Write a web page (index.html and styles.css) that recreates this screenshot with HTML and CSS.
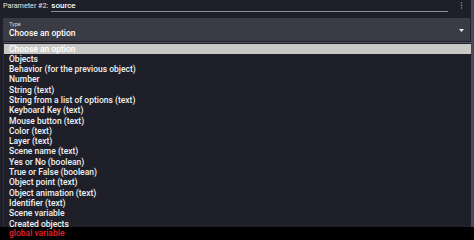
FILE: index.html
```html
<!DOCTYPE html>
<html>
<head>
<meta charset="utf-8">
<link rel="stylesheet" href="styles.css">
</head>
<body>
<div class="page">
  <div class="main">
    <div class="content">
      <div class="param-row">
        <span class="param-label">Parameter #2:</span>
        <span class="param-input">source</span>
        <span class="kebab">
          <svg width="3" height="7" viewBox="0 0 3 7"><circle cx="1.5" cy="1" r="0.7" fill="#9a9aa2"/><circle cx="1.5" cy="3.5" r="0.7" fill="#9a9aa2"/><circle cx="1.5" cy="6" r="0.7" fill="#9a9aa2"/></svg>
        </span>
      </div>
      <div class="select">
        <div class="select-text">
          <div class="select-label">Type</div>
          <div class="select-value">Choose an option</div>
        </div>
        <svg class="arrow" width="5" height="3" viewBox="0 0 5 3"><path d="M0 0h5L2.5 3z" fill="#f0f0f0"/></svg>
      </div>
      <div class="list">
        <div class="item selected">Choose an option</div>
        <div class="item">Objects</div>
        <div class="item">Behavior (for the previous object)</div>
        <div class="item">Number</div>
        <div class="item">String (text)</div>
        <div class="item">String from a list of options (text)</div>
        <div class="item">Keyboard Key (text)</div>
        <div class="item">Mouse button (text)</div>
        <div class="item">Color (text)</div>
        <div class="item">Layer (text)</div>
        <div class="item">Scene name (text)</div>
        <div class="item">Yes or No (boolean)</div>
        <div class="item">True or False (boolean)</div>
        <div class="item">Object point (text)</div>
        <div class="item">Object animation (text)</div>
        <div class="item">Identifier (text)</div>
        <div class="item">Scene variable</div>
        <div class="item">Created objects</div>
      </div>
    </div>
    <div class="scrollbar"></div>
  </div>
  <div class="overflow">
    <div class="item red">global variable</div>
  </div>
</div>
</body>
</html>
```
FILE: styles.css
```css
html, body {
  margin: 0;
  padding: 0;
  background: #000;
}
.page {
  width: 474px;
  height: 240px;
  overflow: hidden;
  font-family: Roboto, "Noto Sans", sans-serif;
  color: #f2f2f2;
}
.main {
  display: flex;
  height: 227px;
  background: #1e1f29;
}
.content {
  flex: 1;
  display: flex;
  flex-direction: column;
  min-width: 0;
}
.scrollbar {
  width: 3px;
  background: #4a4b52;
}
.param-row {
  height: 18px;
  flex: none;
  display: flex;
  align-items: flex-start;
  padding: 0 0 0 3px;
  font-size: 7.2px;
}
.param-label {
  line-height: 12px;
  color: #e6e6e6;
}
.param-input {
  margin-left: 3px;
  width: 397px;
  height: 11px;
  line-height: 12px;
  border-bottom: 1px solid #8a8b92;
  color: #ffffff;
  font-size: 8px;
  font-weight: 500;
}
.kebab {
  margin-left: 12px;
  padding-top: 2px;
}
.select {
  flex: none;
  background: #3a3b44;
  margin: 0 1px 0 3px;
  height: 23px;
  display: flex;
  align-items: center;
  justify-content: space-between;
  padding: 0 6px 0 6px;
}
.select-label {
  font-size: 5.5px;
  line-height: 7px;
  color: #d8d8dc;
}
.select-value {
  font-size: 8.5px;
  line-height: 11px;
  color: #ffffff;
  font-weight: 500;
}
.arrow {
  margin-top: 1px;
}
.list {
  flex: 1;
  min-height: 0;
  margin: 1px 0 0 3px;
  padding-top: 0.5px;
  border-top: 1px solid #555660;
  border-left: 1px solid #2c2d38;
}
.item {
  font-size: 8.5px;
  line-height: 10.3px;
  height: 10.3px;
  padding-left: 5px;
  white-space: nowrap;
  font-weight: 500;
}
.item.selected {
  background: #c8c9c6;
  color: #ffffff;
}
.overflow {
  padding-left: 4px;
  padding-top: 1px;
}
.item.red {
  color: #e8202a;
}
```
